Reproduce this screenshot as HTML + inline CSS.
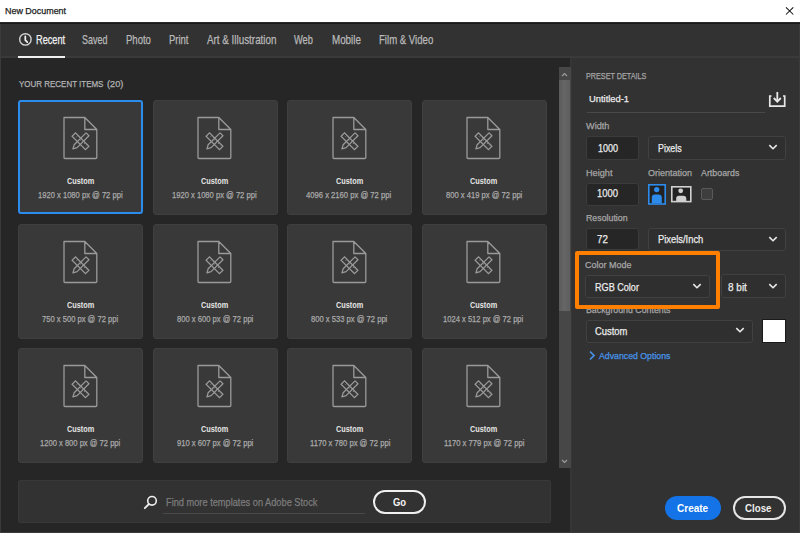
<!DOCTYPE html>
<html><head><meta charset="utf-8"><style>
html,body{margin:0;padding:0;}
body{width:800px;height:533px;overflow:hidden;position:relative;background:#323232;font-family:"Liberation Sans",sans-serif;}
.a{position:absolute;}
.t{position:absolute;white-space:nowrap;transform-origin:0 0;}
svg{overflow:visible}
</style></head><body>
<div class="a" style="left:0px;top:0px;width:800px;height:22px;background:#fff"></div>
<div class="a" style="left:0px;top:22px;width:800px;height:1px;background:#2a2a2a"></div>
<div class="a" style="left:0px;top:23px;width:800px;height:1px;background:#1a1a1a"></div>
<div class="a" style="left:0px;top:24px;width:800px;height:33px;background:#323232"></div>
<div class="a" style="left:0px;top:56px;width:800px;height:2px;background:#3a3a3a"></div>
<div class="a" style="left:0px;top:58px;width:571px;height:475px;background:#262626"></div>
<div class="a" style="left:571px;top:58px;width:229px;height:475px;background:#323232"></div>
<div class="a" style="left:570px;top:58px;width:2px;height:475px;background:#363636"></div>
<div class="a" style="left:0px;top:24px;width:1px;height:509px;background:#3a3a3a"></div>
<div class="a" style="left:799px;top:24px;width:1px;height:509px;background:#3a3a3a"></div>
<div class="a" style="left:0px;top:532px;width:800px;height:1px;background:#3a3a3a"></div>
<div class="t" style="left:5.23px;top:7.45px;font-size:9.08px;line-height:9.08px;color:#1b1b1b;font-weight:normal;transform:scaleX(0.984);-webkit-text-stroke:0.25px #1b1b1b;">New Document</div>
<svg class="a" style="left:785px;top:5.6px" width="10" height="10" viewBox="0 0 10 10"><path d="M1 1.3L8.3 8.5M8.3 1.3L1 8.5" stroke="#111" stroke-width="1.05" fill="none"/></svg>
<div class="t" style="left:35.95px;top:33.63px;font-size:12.72px;line-height:12.72px;color:#f2f2f2;font-weight:normal;transform:scaleX(0.723);-webkit-text-stroke:0.25px #f2f2f2;">Recent</div>
<div class="t" style="left:81.58px;top:34.39px;font-size:12.72px;line-height:12.72px;color:#b9b9b9;font-weight:normal;transform:scaleX(0.705);-webkit-text-stroke:0.25px #b9b9b9;">Saved</div>
<div class="t" style="left:125.90px;top:34.39px;font-size:12.72px;line-height:12.72px;color:#b9b9b9;font-weight:normal;transform:scaleX(0.749);-webkit-text-stroke:0.25px #b9b9b9;">Photo</div>
<div class="t" style="left:168.89px;top:34.39px;font-size:12.72px;line-height:12.72px;color:#b9b9b9;font-weight:normal;transform:scaleX(0.746);-webkit-text-stroke:0.25px #b9b9b9;">Print</div>
<div class="t" style="left:206.70px;top:34.39px;font-size:12.72px;line-height:12.72px;color:#b9b9b9;font-weight:normal;transform:scaleX(0.774);-webkit-text-stroke:0.25px #b9b9b9;">Art &amp; Illustration</div>
<div class="t" style="left:294.20px;top:34.39px;font-size:12.72px;line-height:12.72px;color:#b9b9b9;font-weight:normal;transform:scaleX(0.727);-webkit-text-stroke:0.25px #b9b9b9;">Web</div>
<div class="t" style="left:331.88px;top:34.39px;font-size:12.72px;line-height:12.72px;color:#b9b9b9;font-weight:normal;transform:scaleX(0.771);-webkit-text-stroke:0.25px #b9b9b9;">Mobile</div>
<div class="t" style="left:379.46px;top:34.39px;font-size:12.72px;line-height:12.72px;color:#b9b9b9;font-weight:normal;transform:scaleX(0.755);-webkit-text-stroke:0.25px #b9b9b9;">Film &amp; Video</div>
<div class="a" style="left:18px;top:56px;width:47px;height:2px;background:#f0f0f0"></div>
<svg class="a" style="left:17px;top:32px" width="16" height="16" viewBox="0 0 16 16"><circle cx="8.4" cy="7.4" r="5.7" stroke="#d2d2d2" stroke-width="1.4" fill="none"/><path d="M8.3 4.3V8.2L10.3 10.1" stroke="#f4f4f4" stroke-width="1.7" fill="none" stroke-linecap="round"/></svg>
<div class="t" style="left:18.70px;top:79.08px;font-size:9.59px;line-height:9.59px;color:#b4b4b4;font-weight:normal;transform:scaleX(0.832);-webkit-text-stroke:0.25px #b4b4b4;">YOUR RECENT ITEMS</div>
<div class="t" style="left:106.62px;top:78.97px;font-size:9.59px;line-height:9.59px;color:#b4b4b4;font-weight:normal;transform:scaleX(0.959);-webkit-text-stroke:0.25px #b4b4b4;">(20)</div>
<div class="a" style="left:18.4px;top:100.2px;width:124.6px;height:114.3px;box-sizing:border-box;background:#393939;border:2px solid #2d8ceb;border-radius:3px"></div>
<svg class="a" style="left:59.80px;top:114.00px" width="40" height="48" viewBox="0 0 40 48">
<path d="M4 3.5H24.8L36.8 15.5V43.5Q36.8 44.5 35.8 44.5H5Q4 44.5 4 43.5Z M24.8 3.5V15.5H36.8" stroke="#9a9a9a" stroke-width="1.3" fill="none" stroke-linejoin="round"/>
<g transform="translate(20.5 27.3) scale(0.86) rotate(45)"><rect x="-11" y="-2.8" width="22" height="5.6" stroke="#9a9a9a" stroke-width="1.45" fill="none"/>
<path d="M-7 -2.8V-0.6M-4 -2.8V-1.4M-1 -2.8V-0.6M2 -2.8V-1.4M5 -2.8V-0.6M8 -2.8V-1.4" stroke="#9a9a9a" stroke-width="0.9"/></g>
<g transform="translate(20.5 27.3) scale(0.86) rotate(-45)"><path d="M11.5 -2.4H-8L-12.5 0L-8 2.4H11.5Z" stroke="#9a9a9a" stroke-width="1.45" fill="none" stroke-linejoin="round"/></g>
</svg>
<div class="t" style="left:66.62px;top:178.11px;font-size:8.28px;line-height:8.28px;color:#e6e6e6;font-weight:bold;transform:scaleX(0.883);">Custom</div>
<div class="t" style="left:38.12px;top:191.43px;font-size:9.01px;line-height:9.01px;color:#a9a9a9;font-weight:normal;transform:scaleX(0.844);-webkit-text-stroke:0.25px #a9a9a9;">1920 x 1080 px @ 72 ppi</div>
<div class="a" style="left:152.5px;top:100px;width:125px;height:114.5px;background:#393939;border:1px solid #3f3f3f;box-sizing:border-box;border-radius:3px"></div>
<svg class="a" style="left:194.30px;top:114.00px" width="40" height="48" viewBox="0 0 40 48">
<path d="M4 3.5H24.8L36.8 15.5V43.5Q36.8 44.5 35.8 44.5H5Q4 44.5 4 43.5Z M24.8 3.5V15.5H36.8" stroke="#9a9a9a" stroke-width="1.3" fill="none" stroke-linejoin="round"/>
<g transform="translate(20.5 27.3) scale(0.86) rotate(45)"><rect x="-11" y="-2.8" width="22" height="5.6" stroke="#9a9a9a" stroke-width="1.45" fill="none"/>
<path d="M-7 -2.8V-0.6M-4 -2.8V-1.4M-1 -2.8V-0.6M2 -2.8V-1.4M5 -2.8V-0.6M8 -2.8V-1.4" stroke="#9a9a9a" stroke-width="0.9"/></g>
<g transform="translate(20.5 27.3) scale(0.86) rotate(-45)"><path d="M11.5 -2.4H-8L-12.5 0L-8 2.4H11.5Z" stroke="#9a9a9a" stroke-width="1.45" fill="none" stroke-linejoin="round"/></g>
</svg>
<div class="t" style="left:201.47px;top:178.11px;font-size:8.28px;line-height:8.28px;color:#e6e6e6;font-weight:bold;transform:scaleX(0.883);">Custom</div>
<div class="t" style="left:172.27px;top:191.43px;font-size:9.01px;line-height:9.01px;color:#a9a9a9;font-weight:normal;transform:scaleX(0.844);-webkit-text-stroke:0.25px #a9a9a9;">1920 x 1080 px @ 72 ppi</div>
<div class="a" style="left:287px;top:100px;width:125px;height:114.5px;background:#393939;border:1px solid #3f3f3f;box-sizing:border-box;border-radius:3px"></div>
<svg class="a" style="left:328.80px;top:114.00px" width="40" height="48" viewBox="0 0 40 48">
<path d="M4 3.5H24.8L36.8 15.5V43.5Q36.8 44.5 35.8 44.5H5Q4 44.5 4 43.5Z M24.8 3.5V15.5H36.8" stroke="#9a9a9a" stroke-width="1.3" fill="none" stroke-linejoin="round"/>
<g transform="translate(20.5 27.3) scale(0.86) rotate(45)"><rect x="-11" y="-2.8" width="22" height="5.6" stroke="#9a9a9a" stroke-width="1.45" fill="none"/>
<path d="M-7 -2.8V-0.6M-4 -2.8V-1.4M-1 -2.8V-0.6M2 -2.8V-1.4M5 -2.8V-0.6M8 -2.8V-1.4" stroke="#9a9a9a" stroke-width="0.9"/></g>
<g transform="translate(20.5 27.3) scale(0.86) rotate(-45)"><path d="M11.5 -2.4H-8L-12.5 0L-8 2.4H11.5Z" stroke="#9a9a9a" stroke-width="1.45" fill="none" stroke-linejoin="round"/></g>
</svg>
<div class="t" style="left:335.62px;top:178.11px;font-size:8.28px;line-height:8.28px;color:#e6e6e6;font-weight:bold;transform:scaleX(0.883);">Custom</div>
<div class="t" style="left:306.38px;top:191.43px;font-size:9.01px;line-height:9.01px;color:#a9a9a9;font-weight:normal;transform:scaleX(0.850);-webkit-text-stroke:0.25px #a9a9a9;">4096 x 2160 px @ 72 ppi</div>
<div class="a" style="left:421.5px;top:100px;width:125px;height:114.5px;background:#393939;border:1px solid #3f3f3f;box-sizing:border-box;border-radius:3px"></div>
<svg class="a" style="left:463.30px;top:114.00px" width="40" height="48" viewBox="0 0 40 48">
<path d="M4 3.5H24.8L36.8 15.5V43.5Q36.8 44.5 35.8 44.5H5Q4 44.5 4 43.5Z M24.8 3.5V15.5H36.8" stroke="#9a9a9a" stroke-width="1.3" fill="none" stroke-linejoin="round"/>
<g transform="translate(20.5 27.3) scale(0.86) rotate(45)"><rect x="-11" y="-2.8" width="22" height="5.6" stroke="#9a9a9a" stroke-width="1.45" fill="none"/>
<path d="M-7 -2.8V-0.6M-4 -2.8V-1.4M-1 -2.8V-0.6M2 -2.8V-1.4M5 -2.8V-0.6M8 -2.8V-1.4" stroke="#9a9a9a" stroke-width="0.9"/></g>
<g transform="translate(20.5 27.3) scale(0.86) rotate(-45)"><path d="M11.5 -2.4H-8L-12.5 0L-8 2.4H11.5Z" stroke="#9a9a9a" stroke-width="1.45" fill="none" stroke-linejoin="round"/></g>
</svg>
<div class="t" style="left:470.47px;top:178.11px;font-size:8.28px;line-height:8.28px;color:#e6e6e6;font-weight:bold;transform:scaleX(0.883);">Custom</div>
<div class="t" style="left:445.77px;top:191.43px;font-size:9.01px;line-height:9.01px;color:#a9a9a9;font-weight:normal;transform:scaleX(0.846);-webkit-text-stroke:0.25px #a9a9a9;">800 x 419 px @ 72 ppi</div>
<div class="a" style="left:18px;top:224px;width:125px;height:114.5px;background:#393939;border:1px solid #3f3f3f;box-sizing:border-box;border-radius:3px"></div>
<svg class="a" style="left:59.80px;top:238.00px" width="40" height="48" viewBox="0 0 40 48">
<path d="M4 3.5H24.8L36.8 15.5V43.5Q36.8 44.5 35.8 44.5H5Q4 44.5 4 43.5Z M24.8 3.5V15.5H36.8" stroke="#9a9a9a" stroke-width="1.3" fill="none" stroke-linejoin="round"/>
<g transform="translate(20.5 27.3) scale(0.86) rotate(45)"><rect x="-11" y="-2.8" width="22" height="5.6" stroke="#9a9a9a" stroke-width="1.45" fill="none"/>
<path d="M-7 -2.8V-0.6M-4 -2.8V-1.4M-1 -2.8V-0.6M2 -2.8V-1.4M5 -2.8V-0.6M8 -2.8V-1.4" stroke="#9a9a9a" stroke-width="0.9"/></g>
<g transform="translate(20.5 27.3) scale(0.86) rotate(-45)"><path d="M11.5 -2.4H-8L-12.5 0L-8 2.4H11.5Z" stroke="#9a9a9a" stroke-width="1.45" fill="none" stroke-linejoin="round"/></g>
</svg>
<div class="t" style="left:66.62px;top:302.11px;font-size:8.28px;line-height:8.28px;color:#e6e6e6;font-weight:bold;transform:scaleX(0.883);">Custom</div>
<div class="t" style="left:42.09px;top:315.43px;font-size:9.01px;line-height:9.01px;color:#a9a9a9;font-weight:normal;transform:scaleX(0.844);-webkit-text-stroke:0.25px #a9a9a9;">750 x 500 px @ 72 ppi</div>
<div class="a" style="left:152.5px;top:224px;width:125px;height:114.5px;background:#393939;border:1px solid #3f3f3f;box-sizing:border-box;border-radius:3px"></div>
<svg class="a" style="left:194.30px;top:238.00px" width="40" height="48" viewBox="0 0 40 48">
<path d="M4 3.5H24.8L36.8 15.5V43.5Q36.8 44.5 35.8 44.5H5Q4 44.5 4 43.5Z M24.8 3.5V15.5H36.8" stroke="#9a9a9a" stroke-width="1.3" fill="none" stroke-linejoin="round"/>
<g transform="translate(20.5 27.3) scale(0.86) rotate(45)"><rect x="-11" y="-2.8" width="22" height="5.6" stroke="#9a9a9a" stroke-width="1.45" fill="none"/>
<path d="M-7 -2.8V-0.6M-4 -2.8V-1.4M-1 -2.8V-0.6M2 -2.8V-1.4M5 -2.8V-0.6M8 -2.8V-1.4" stroke="#9a9a9a" stroke-width="0.9"/></g>
<g transform="translate(20.5 27.3) scale(0.86) rotate(-45)"><path d="M11.5 -2.4H-8L-12.5 0L-8 2.4H11.5Z" stroke="#9a9a9a" stroke-width="1.45" fill="none" stroke-linejoin="round"/></g>
</svg>
<div class="t" style="left:201.47px;top:302.11px;font-size:8.28px;line-height:8.28px;color:#e6e6e6;font-weight:bold;transform:scaleX(0.883);">Custom</div>
<div class="t" style="left:176.77px;top:315.43px;font-size:9.01px;line-height:9.01px;color:#a9a9a9;font-weight:normal;transform:scaleX(0.846);-webkit-text-stroke:0.25px #a9a9a9;">800 x 600 px @ 72 ppi</div>
<div class="a" style="left:287px;top:224px;width:125px;height:114.5px;background:#393939;border:1px solid #3f3f3f;box-sizing:border-box;border-radius:3px"></div>
<svg class="a" style="left:328.80px;top:238.00px" width="40" height="48" viewBox="0 0 40 48">
<path d="M4 3.5H24.8L36.8 15.5V43.5Q36.8 44.5 35.8 44.5H5Q4 44.5 4 43.5Z M24.8 3.5V15.5H36.8" stroke="#9a9a9a" stroke-width="1.3" fill="none" stroke-linejoin="round"/>
<g transform="translate(20.5 27.3) scale(0.86) rotate(45)"><rect x="-11" y="-2.8" width="22" height="5.6" stroke="#9a9a9a" stroke-width="1.45" fill="none"/>
<path d="M-7 -2.8V-0.6M-4 -2.8V-1.4M-1 -2.8V-0.6M2 -2.8V-1.4M5 -2.8V-0.6M8 -2.8V-1.4" stroke="#9a9a9a" stroke-width="0.9"/></g>
<g transform="translate(20.5 27.3) scale(0.86) rotate(-45)"><path d="M11.5 -2.4H-8L-12.5 0L-8 2.4H11.5Z" stroke="#9a9a9a" stroke-width="1.45" fill="none" stroke-linejoin="round"/></g>
</svg>
<div class="t" style="left:335.62px;top:302.11px;font-size:8.28px;line-height:8.28px;color:#e6e6e6;font-weight:bold;transform:scaleX(0.883);">Custom</div>
<div class="t" style="left:311.02px;top:315.43px;font-size:9.01px;line-height:9.01px;color:#a9a9a9;font-weight:normal;transform:scaleX(0.846);-webkit-text-stroke:0.25px #a9a9a9;">800 x 533 px @ 72 ppi</div>
<div class="a" style="left:421.5px;top:224px;width:125px;height:114.5px;background:#393939;border:1px solid #3f3f3f;box-sizing:border-box;border-radius:3px"></div>
<svg class="a" style="left:463.30px;top:238.00px" width="40" height="48" viewBox="0 0 40 48">
<path d="M4 3.5H24.8L36.8 15.5V43.5Q36.8 44.5 35.8 44.5H5Q4 44.5 4 43.5Z M24.8 3.5V15.5H36.8" stroke="#9a9a9a" stroke-width="1.3" fill="none" stroke-linejoin="round"/>
<g transform="translate(20.5 27.3) scale(0.86) rotate(45)"><rect x="-11" y="-2.8" width="22" height="5.6" stroke="#9a9a9a" stroke-width="1.45" fill="none"/>
<path d="M-7 -2.8V-0.6M-4 -2.8V-1.4M-1 -2.8V-0.6M2 -2.8V-1.4M5 -2.8V-0.6M8 -2.8V-1.4" stroke="#9a9a9a" stroke-width="0.9"/></g>
<g transform="translate(20.5 27.3) scale(0.86) rotate(-45)"><path d="M11.5 -2.4H-8L-12.5 0L-8 2.4H11.5Z" stroke="#9a9a9a" stroke-width="1.45" fill="none" stroke-linejoin="round"/></g>
</svg>
<div class="t" style="left:470.47px;top:302.11px;font-size:8.28px;line-height:8.28px;color:#e6e6e6;font-weight:bold;transform:scaleX(0.883);">Custom</div>
<div class="t" style="left:443.47px;top:315.43px;font-size:9.01px;line-height:9.01px;color:#a9a9a9;font-weight:normal;transform:scaleX(0.843);-webkit-text-stroke:0.25px #a9a9a9;">1024 x 512 px @ 72 ppi</div>
<div class="a" style="left:18px;top:348px;width:125px;height:114.5px;background:#393939;border:1px solid #3f3f3f;box-sizing:border-box;border-radius:3px"></div>
<svg class="a" style="left:59.80px;top:362.00px" width="40" height="48" viewBox="0 0 40 48">
<path d="M4 3.5H24.8L36.8 15.5V43.5Q36.8 44.5 35.8 44.5H5Q4 44.5 4 43.5Z M24.8 3.5V15.5H36.8" stroke="#9a9a9a" stroke-width="1.3" fill="none" stroke-linejoin="round"/>
<g transform="translate(20.5 27.3) scale(0.86) rotate(45)"><rect x="-11" y="-2.8" width="22" height="5.6" stroke="#9a9a9a" stroke-width="1.45" fill="none"/>
<path d="M-7 -2.8V-0.6M-4 -2.8V-1.4M-1 -2.8V-0.6M2 -2.8V-1.4M5 -2.8V-0.6M8 -2.8V-1.4" stroke="#9a9a9a" stroke-width="0.9"/></g>
<g transform="translate(20.5 27.3) scale(0.86) rotate(-45)"><path d="M11.5 -2.4H-8L-12.5 0L-8 2.4H11.5Z" stroke="#9a9a9a" stroke-width="1.45" fill="none" stroke-linejoin="round"/></g>
</svg>
<div class="t" style="left:66.62px;top:426.11px;font-size:8.28px;line-height:8.28px;color:#e6e6e6;font-weight:bold;transform:scaleX(0.883);">Custom</div>
<div class="t" style="left:40.22px;top:439.43px;font-size:9.01px;line-height:9.01px;color:#a9a9a9;font-weight:normal;transform:scaleX(0.843);-webkit-text-stroke:0.25px #a9a9a9;">1200 x 800 px @ 72 ppi</div>
<div class="a" style="left:152.5px;top:348px;width:125px;height:114.5px;background:#393939;border:1px solid #3f3f3f;box-sizing:border-box;border-radius:3px"></div>
<svg class="a" style="left:194.30px;top:362.00px" width="40" height="48" viewBox="0 0 40 48">
<path d="M4 3.5H24.8L36.8 15.5V43.5Q36.8 44.5 35.8 44.5H5Q4 44.5 4 43.5Z M24.8 3.5V15.5H36.8" stroke="#9a9a9a" stroke-width="1.3" fill="none" stroke-linejoin="round"/>
<g transform="translate(20.5 27.3) scale(0.86) rotate(45)"><rect x="-11" y="-2.8" width="22" height="5.6" stroke="#9a9a9a" stroke-width="1.45" fill="none"/>
<path d="M-7 -2.8V-0.6M-4 -2.8V-1.4M-1 -2.8V-0.6M2 -2.8V-1.4M5 -2.8V-0.6M8 -2.8V-1.4" stroke="#9a9a9a" stroke-width="0.9"/></g>
<g transform="translate(20.5 27.3) scale(0.86) rotate(-45)"><path d="M11.5 -2.4H-8L-12.5 0L-8 2.4H11.5Z" stroke="#9a9a9a" stroke-width="1.45" fill="none" stroke-linejoin="round"/></g>
</svg>
<div class="t" style="left:201.47px;top:426.11px;font-size:8.28px;line-height:8.28px;color:#e6e6e6;font-weight:bold;transform:scaleX(0.883);">Custom</div>
<div class="t" style="left:176.77px;top:439.43px;font-size:9.01px;line-height:9.01px;color:#a9a9a9;font-weight:normal;transform:scaleX(0.846);-webkit-text-stroke:0.25px #a9a9a9;">910 x 607 px @ 72 ppi</div>
<div class="a" style="left:287px;top:348px;width:125px;height:114.5px;background:#393939;border:1px solid #3f3f3f;box-sizing:border-box;border-radius:3px"></div>
<svg class="a" style="left:328.80px;top:362.00px" width="40" height="48" viewBox="0 0 40 48">
<path d="M4 3.5H24.8L36.8 15.5V43.5Q36.8 44.5 35.8 44.5H5Q4 44.5 4 43.5Z M24.8 3.5V15.5H36.8" stroke="#9a9a9a" stroke-width="1.3" fill="none" stroke-linejoin="round"/>
<g transform="translate(20.5 27.3) scale(0.86) rotate(45)"><rect x="-11" y="-2.8" width="22" height="5.6" stroke="#9a9a9a" stroke-width="1.45" fill="none"/>
<path d="M-7 -2.8V-0.6M-4 -2.8V-1.4M-1 -2.8V-0.6M2 -2.8V-1.4M5 -2.8V-0.6M8 -2.8V-1.4" stroke="#9a9a9a" stroke-width="0.9"/></g>
<g transform="translate(20.5 27.3) scale(0.86) rotate(-45)"><path d="M11.5 -2.4H-8L-12.5 0L-8 2.4H11.5Z" stroke="#9a9a9a" stroke-width="1.45" fill="none" stroke-linejoin="round"/></g>
</svg>
<div class="t" style="left:335.62px;top:426.11px;font-size:8.28px;line-height:8.28px;color:#e6e6e6;font-weight:bold;transform:scaleX(0.883);">Custom</div>
<div class="t" style="left:309.62px;top:439.43px;font-size:9.01px;line-height:9.01px;color:#a9a9a9;font-weight:normal;transform:scaleX(0.850);-webkit-text-stroke:0.25px #a9a9a9;">1170 x 780 px @ 72 ppi</div>
<div class="a" style="left:421.5px;top:348px;width:125px;height:114.5px;background:#393939;border:1px solid #3f3f3f;box-sizing:border-box;border-radius:3px"></div>
<svg class="a" style="left:463.30px;top:362.00px" width="40" height="48" viewBox="0 0 40 48">
<path d="M4 3.5H24.8L36.8 15.5V43.5Q36.8 44.5 35.8 44.5H5Q4 44.5 4 43.5Z M24.8 3.5V15.5H36.8" stroke="#9a9a9a" stroke-width="1.3" fill="none" stroke-linejoin="round"/>
<g transform="translate(20.5 27.3) scale(0.86) rotate(45)"><rect x="-11" y="-2.8" width="22" height="5.6" stroke="#9a9a9a" stroke-width="1.45" fill="none"/>
<path d="M-7 -2.8V-0.6M-4 -2.8V-1.4M-1 -2.8V-0.6M2 -2.8V-1.4M5 -2.8V-0.6M8 -2.8V-1.4" stroke="#9a9a9a" stroke-width="0.9"/></g>
<g transform="translate(20.5 27.3) scale(0.86) rotate(-45)"><path d="M11.5 -2.4H-8L-12.5 0L-8 2.4H11.5Z" stroke="#9a9a9a" stroke-width="1.45" fill="none" stroke-linejoin="round"/></g>
</svg>
<div class="t" style="left:470.47px;top:426.11px;font-size:8.28px;line-height:8.28px;color:#e6e6e6;font-weight:bold;transform:scaleX(0.883);">Custom</div>
<div class="t" style="left:443.77px;top:439.43px;font-size:9.01px;line-height:9.01px;color:#a9a9a9;font-weight:normal;transform:scaleX(0.850);-webkit-text-stroke:0.25px #a9a9a9;">1170 x 779 px @ 72 ppi</div>
<div class="a" style="left:558.5px;top:67px;width:12.0px;height:401px;background:#474747"></div>
<div class="a" style="left:558.5px;top:80px;width:11.5px;height:230.60000000000002px;background:linear-gradient(to right,#5a5a5a 0%,#666 45%,#5e5e5e 100%)"></div>
<div class="a" style="left:558.5px;top:67px;width:12.0px;height:13px;background:#474747"></div>
<svg class="a" style="left:559px;top:68px" width="11" height="12" viewBox="0 0 11 12"><path d="M3 8L5.5 5.6L8 8" stroke="#9a9a9a" stroke-width="1.3" fill="none"/></svg>
<svg class="a" style="left:559px;top:455px" width="11" height="12" viewBox="0 0 11 12"><path d="M3 5L5.5 7.4L8 5" stroke="#9a9a9a" stroke-width="1.3" fill="none"/></svg>
<div class="a" style="left:18px;top:480px;width:533px;height:43px;background:#323232;border:1px solid #383838;box-sizing:border-box;border-radius:2px"></div>
<svg class="a" style="left:142px;top:493px" width="18" height="18" viewBox="0 0 18 18"><circle cx="10" cy="7.8" r="4.3" stroke="#eee" stroke-width="1.6" fill="none"/><path d="M7 11L2.8 15.2" stroke="#eee" stroke-width="1.8" stroke-linecap="round"/></svg>
<div class="t" style="left:165.61px;top:496.97px;font-size:10.90px;line-height:10.90px;color:#7c7c7c;font-weight:normal;transform:scaleX(0.848);-webkit-text-stroke:0.25px #7c7c7c;">Find more templates on Adobe Stock</div>
<div class="a" style="left:163px;top:513px;width:202px;height:1px;background:#4a4a4a"></div>
<div class="a" style="left:372.5px;top:490px;width:49.5px;height:20px;border:2px solid #f0f0f0;border-radius:12px"></div>
<div class="t" style="left:392.50px;top:497.16px;font-size:10.90px;line-height:10.90px;color:#f2f2f2;font-weight:bold;transform:scaleX(0.865);">Go</div>
<div class="t" style="left:585.81px;top:71.60px;font-size:9.30px;line-height:9.30px;color:#a6a6a6;font-weight:normal;transform:scaleX(0.778);-webkit-text-stroke:0.25px #a6a6a6;">PRESET DETAILS</div>
<div class="t" style="left:588.92px;top:94.46px;font-size:9.81px;line-height:9.81px;color:#ececec;font-weight:normal;transform:scaleX(0.955);-webkit-text-stroke:0.25px #ececec;">Untitled-1</div>
<div class="a" style="left:587px;top:112px;width:178px;height:1px;background:#4a4a4a"></div>
<svg class="a" style="left:767px;top:90px" width="20" height="19" viewBox="0 0 20 19"><path d="M4.5 6H2.8V16.2H17.7V6H16" stroke="#e8e8e8" stroke-width="1.7" fill="none"/><path d="M10.3 2V11" stroke="#e8e8e8" stroke-width="1.8"/><path d="M6.8 8L10.3 11.6L13.8 8" stroke="#e8e8e8" stroke-width="1.8" fill="none"/></svg>
<div class="t" style="left:585.60px;top:121.46px;font-size:9.81px;line-height:9.81px;color:#a6a6a6;font-weight:normal;transform:scaleX(0.934);-webkit-text-stroke:0.25px #a6a6a6;">Width</div>
<div class="a" style="left:585.5px;top:136px;width:53.0px;height:24px;background:#262626;border:1px solid #3c3c3c;border-radius:3px;box-sizing:border-box"></div>
<div class="t" style="left:597.62px;top:142.55px;font-size:10.90px;line-height:10.90px;color:#ececec;font-weight:normal;transform:scaleX(0.831);-webkit-text-stroke:0.25px #ececec;">1000</div>
<div class="a" style="left:648px;top:136px;width:138px;height:23.5px;background:#2f2f2f;border:1px solid #414141;border-radius:3px;box-sizing:border-box"></div>
<div class="t" style="left:657.60px;top:143.86px;font-size:10.47px;line-height:10.47px;color:#ececec;font-weight:normal;transform:scaleX(0.848);-webkit-text-stroke:0.25px #ececec;">Pixels</div>
<svg class="a" style="left:768px;top:144px" width="10" height="7" viewBox="0 0 10 7"><path d="M1.3 1.1L5 4.7L8.7 1.1" stroke="#eaeaea" stroke-width="1.6" fill="none"/></svg>
<div class="t" style="left:585.65px;top:167.66px;font-size:9.59px;line-height:9.59px;color:#a6a6a6;font-weight:normal;transform:scaleX(0.955);-webkit-text-stroke:0.25px #a6a6a6;">Height</div>
<div class="t" style="left:647.73px;top:167.66px;font-size:9.59px;line-height:9.59px;color:#a6a6a6;font-weight:normal;transform:scaleX(0.941);-webkit-text-stroke:0.25px #a6a6a6;">Orientation</div>
<div class="t" style="left:701.00px;top:167.66px;font-size:9.59px;line-height:9.59px;color:#a6a6a6;font-weight:normal;transform:scaleX(0.925);-webkit-text-stroke:0.25px #a6a6a6;">Artboards</div>
<div class="a" style="left:585.5px;top:182.5px;width:53.0px;height:23.0px;background:#262626;border:1px solid #3c3c3c;border-radius:3px;box-sizing:border-box"></div>
<div class="t" style="left:596.62px;top:188.28px;font-size:11.19px;line-height:11.19px;color:#ececec;font-weight:normal;transform:scaleX(0.847);-webkit-text-stroke:0.25px #ececec;">1000</div>
<svg class="a" style="left:648px;top:183.5px" width="18" height="21" viewBox="0 0 18 21"><rect x="0.8" y="0.8" width="16.4" height="19.2" fill="#222" stroke="#2d8ceb" stroke-width="1.6"/><circle cx="8.7" cy="5.6" r="2.7" fill="#2d8ceb"/><path d="M3.8 19.2V13.4Q3.8 10.4 6.8 10.4H10.6Q13.8 10.4 13.8 13.4V19.2Z" fill="#2d8ceb"/></svg>
<svg class="a" style="left:670.5px;top:185.8px" width="21" height="17" viewBox="0 0 21 17"><rect x="0.8" y="0.8" width="19" height="14.8" fill="#222" stroke="#d0d0d0" stroke-width="1.6"/><circle cx="9.7" cy="4.8" r="2.4" fill="#d0d0d0"/><path d="M5.2 15V12.4Q5.2 9.7 8 9.7H12.2Q15.3 9.7 15.3 12.4V15Z" fill="#d0d0d0"/></svg>
<div class="a" style="left:701px;top:188px;width:12px;height:12px;background:#3e3e3e;border:1.5px solid #5a5a5a;border-radius:2px;box-sizing:border-box"></div>
<div class="t" style="left:585.90px;top:213.96px;font-size:8.72px;line-height:8.72px;color:#a6a6a6;font-weight:normal;transform:scaleX(1.010);-webkit-text-stroke:0.25px #a6a6a6;">Resolution</div>
<div class="a" style="left:585.5px;top:227.5px;width:53.0px;height:22.5px;background:#262626;border:1px solid #3c3c3c;border-radius:3px;box-sizing:border-box"></div>
<div class="t" style="left:596.84px;top:234.53px;font-size:10.17px;line-height:10.17px;color:#ececec;font-weight:normal;transform:scaleX(0.961);-webkit-text-stroke:0.25px #ececec;">72</div>
<div class="a" style="left:648px;top:227.5px;width:138px;height:23.0px;background:#2f2f2f;border:1px solid #414141;border-radius:3px;box-sizing:border-box"></div>
<div class="t" style="left:657.63px;top:233.82px;font-size:10.90px;line-height:10.90px;color:#ececec;font-weight:normal;transform:scaleX(0.860);-webkit-text-stroke:0.25px #ececec;">Pixels/Inch</div>
<svg class="a" style="left:768px;top:236px" width="10" height="7" viewBox="0 0 10 7"><path d="M1.3 1.1L5 4.7L8.7 1.1" stroke="#eaeaea" stroke-width="1.6" fill="none"/></svg>
<div class="t" style="left:585.69px;top:305.32px;font-size:9.45px;line-height:9.45px;color:#a6a6a6;font-weight:normal;transform:scaleX(0.931);-webkit-text-stroke:0.25px #a6a6a6;">Background Contents</div>
<div class="t" style="left:585.34px;top:260.43px;font-size:9.59px;line-height:9.59px;color:#a6a6a6;font-weight:normal;transform:scaleX(0.937);-webkit-text-stroke:0.25px #a6a6a6;">Color Mode</div>
<div class="a" style="left:585px;top:274.5px;width:125px;height:23.0px;background:#2f2f2f;border:1px solid #414141;border-radius:3px;box-sizing:border-box"></div>
<div class="t" style="left:594.96px;top:282.32px;font-size:10.76px;line-height:10.76px;color:#ececec;font-weight:normal;transform:scaleX(0.845);-webkit-text-stroke:0.25px #ececec;">RGB Color</div>
<svg class="a" style="left:692px;top:283px" width="10" height="7" viewBox="0 0 10 7"><path d="M1.3 1.1L5 4.7L8.7 1.1" stroke="#eaeaea" stroke-width="1.6" fill="none"/></svg>
<div class="a" style="left:720.5px;top:274px;width:65.5px;height:23.5px;background:#2f2f2f;border:1px solid #414141;border-radius:3px;box-sizing:border-box"></div>
<div class="t" style="left:728.38px;top:282.06px;font-size:10.54px;line-height:10.54px;color:#ececec;font-weight:normal;transform:scaleX(0.948);-webkit-text-stroke:0.25px #ececec;">8 bit</div>
<svg class="a" style="left:768px;top:283px" width="10" height="7" viewBox="0 0 10 7"><path d="M1.3 1.1L5 4.7L8.7 1.1" stroke="#eaeaea" stroke-width="1.6" fill="none"/></svg>
<div class="a" style="left:575px;top:251px;width:137px;height:50px;border:4px solid #ff7f00;border-radius:2px"></div>
<div class="a" style="left:585.5px;top:319.5px;width:167.5px;height:23.0px;background:#2f2f2f;border:1px solid #414141;border-radius:3px;box-sizing:border-box"></div>
<div class="t" style="left:594.52px;top:327.26px;font-size:10.39px;line-height:10.39px;color:#ececec;font-weight:normal;transform:scaleX(0.908);-webkit-text-stroke:0.25px #ececec;">Custom</div>
<svg class="a" style="left:735px;top:327px" width="10" height="7" viewBox="0 0 10 7"><path d="M1.3 1.1L5 4.7L8.7 1.1" stroke="#eaeaea" stroke-width="1.6" fill="none"/></svg>
<div class="a" style="left:762px;top:319px;width:24px;height:24px;background:#fff;border:1px solid #1a1a1a;box-sizing:border-box"></div>
<svg class="a" style="left:588px;top:350px" width="8" height="11" viewBox="0 0 8 11"><path d="M2 1.5L6 5.5L2 9.5" stroke="#4794ea" stroke-width="1.7" fill="none"/></svg>
<div class="t" style="left:598.92px;top:352.10px;font-size:9.08px;line-height:9.08px;color:#4794ea;font-weight:normal;transform:scaleX(0.963);-webkit-text-stroke:0.25px #4794ea;">Advanced Options</div>
<div class="a" style="left:665px;top:496px;width:56px;height:23.5px;background:#1473e6;border-radius:12px"></div>
<div class="t" style="left:676.51px;top:502.62px;font-size:11.34px;line-height:11.34px;color:#ffffff;font-weight:bold;transform:scaleX(0.884);">Create</div>
<div class="a" style="left:732.5px;top:496px;width:49.5px;height:19.5px;border:2px solid #e6e6e6;border-radius:12px"></div>
<div class="t" style="left:745.40px;top:502.72px;font-size:11.34px;line-height:11.34px;color:#eeeeee;font-weight:bold;transform:scaleX(0.857);">Close</div>
</body></html>
